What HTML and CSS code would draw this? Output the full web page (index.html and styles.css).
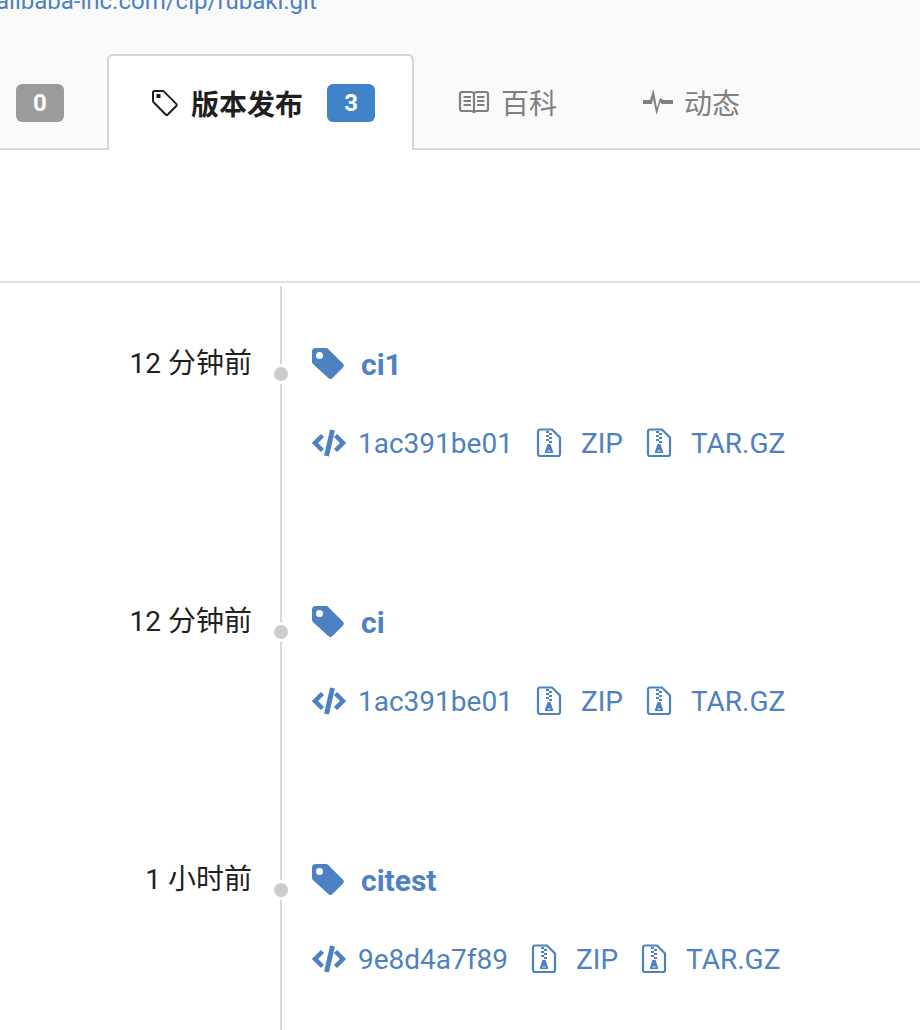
FILE: index.html
```html
<!DOCTYPE html>
<html lang="zh">
<head>
<meta charset="utf-8">
<title>版本发布</title>
<link rel="stylesheet" href="styles.css">
</head>
<body>
<svg class="defs" width="0" height="0">
  <symbol id="i-tag" viewBox="0 0 32 32"><path fill-rule="evenodd" d="M0 3.500A3.500 3.500 0 0 1 3.500 0h10.600a3 3 0 0 1 2.100.900l14.600 14.600a3 3 0 0 1 0 4.200l-10.300 10.400a3 3 0 0 1-4.200 0L.900 15.900a3 3 0 0 1-.900-2.100zM7.500 4a3.500 3.500 0 1 0 0 7 3.500 3.500 0 0 0 0-7z" fill="#4e81c1"/></symbol>
  <symbol id="i-code" viewBox="0 0 36 28"><path d="M11.500 6.500L4 14l7.500 7.500M24.500 6.500L32 14l-7.500 7.500" fill="none" stroke="#4e81c1" stroke-width="4.500"/><path d="M21.500 1l-6 26" fill="none" stroke="#4e81c1" stroke-width="5"/></symbol>
  <symbol id="i-zip" viewBox="0 0 26 30"><path d="M2 3.500A2 2 0 0 1 4 1.500h12l8 8V26a2 2 0 0 1-2 2H4a2 2 0 0 1-2-2z" fill="none" stroke="#4e81c1" stroke-width="2.200"/><path d="M10 3h3v2h-3zM13 5h3v2h-3zM10 7h3v2h-3zM13 9h3v2h-3zM10 11h3v2h-3zM13 13h3v2h-3zM11.500 16h3l2.500 7.500v1.500H9v-1.500zM11.500 22.500v1h3v-1z" fill="#4e81c1"/></symbol>
</svg>
<header class="head">
  <a class="url">alibaba-inc.com/cip/rubaki.git</a>
  <nav class="tabs">
    <span class="badge grey">0</span>
    <a class="tab active">
      <svg width="28" height="28" viewBox="0 0 28 28"><path d="M2 3.500A1.500 1.500 0 0 1 3.500 2h8.300a1.500 1.500 0 0 1 1 .400l12.500 12.500a1.500 1.500 0 0 1 0 2.100l-8.500 8.500a1.500 1.500 0 0 1-2.100 0L2.400 13a1.500 1.500 0 0 1-.400-1z" fill="none" stroke="#1f1f1f" stroke-width="2"/><rect x="5.500" y="5" width="4" height="4" fill="#1f1f1f"/></svg>
      <span class="tl">版本发布</span>
      <span class="badge blue">3</span>
    </a>
    <a class="tab plain wiki">
      <svg width="32" height="24" viewBox="0 0 32 24"><path d="M4 2h8.500c1.700 0 3.500 .7 3.500 2 0-1.300 1.800-2 3.500-2H28a2 2 0 0 1 2 2v15a2 2 0 0 1-2 2h-8.500c-1.700 0-3.500 .5-3.500 2 0-1.500-1.800-2-3.500-2H4a2 2 0 0 1-2-2V4a2 2 0 0 1 2-2zM16 4v19" fill="none" stroke="#808080" stroke-width="2.200"/><path d="M5.500 7H13M5.500 11H13M5.500 15H13M19 7h7.500M19 11h7.500M19 15h7.500" stroke="#808080" stroke-width="2.200"/></svg>
      <span>百科</span>
    </a>
    <a class="tab plain pulse">
      <svg width="30" height="26" viewBox="0 0 30 26"><path d="M0 11h7l3.500-11 3.500 19 3-10 3.500 2h9.500v4h-11l-2-1.500L13.500 26 10 9.500 9 15H0z" fill="#808080"/></svg>
      <span>动态</span>
    </a>
  </nav>
</header>
<div class="filter"></div>
<main class="timeline">
  <article class="rel">
    <time class="when">12 分钟前</time>
    <span class="dot"></span>
    <div class="info">
      <h3 class="name"><svg width="32" height="32"><use href="#i-tag"/></svg><span>ci1</span></h3>
      <div class="links">
        <svg width="36" height="28"><use href="#i-code"/></svg>
        <span class="sha">1ac391be01</span>
        <svg class="zip" width="26" height="30"><use href="#i-zip"/></svg>
        <span class="fmt">ZIP</span>
        <svg class="zip" width="26" height="30"><use href="#i-zip"/></svg>
        <span class="fmt">TAR.GZ</span>
      </div>
    </div>
  </article>
  <article class="rel">
    <time class="when">12 分钟前</time>
    <span class="dot"></span>
    <div class="info">
      <h3 class="name"><svg width="32" height="32"><use href="#i-tag"/></svg><span>ci</span></h3>
      <div class="links">
        <svg width="36" height="28"><use href="#i-code"/></svg>
        <span class="sha">1ac391be01</span>
        <svg class="zip" width="26" height="30"><use href="#i-zip"/></svg>
        <span class="fmt">ZIP</span>
        <svg class="zip" width="26" height="30"><use href="#i-zip"/></svg>
        <span class="fmt">TAR.GZ</span>
      </div>
    </div>
  </article>
  <article class="rel">
    <time class="when">1 小时前</time>
    <span class="dot"></span>
    <div class="info">
      <h3 class="name"><svg width="32" height="32"><use href="#i-tag"/></svg><span>citest</span></h3>
      <div class="links">
        <svg width="36" height="28"><use href="#i-code"/></svg>
        <span class="sha">9e8d4a7f89</span>
        <svg class="zip" width="26" height="30"><use href="#i-zip"/></svg>
        <span class="fmt">ZIP</span>
        <svg class="zip" width="26" height="30"><use href="#i-zip"/></svg>
        <span class="fmt">TAR.GZ</span>
      </div>
    </div>
  </article>
</main>
```

FILE: styles.css
```css
* { box-sizing: border-box; }
html, body { margin: 0; height: 1030px; overflow: hidden; background: #fff; }
body { font-family: Roboto, "Noto Sans CJK SC", sans-serif; font-size: 28px; color: #212121; }
svg { display: block; flex: none; }
.defs { position: absolute; }

.head { display: flow-root; height: 150px; background: #fafafa; border-bottom: 2px solid #d9d9d9; }
.url { display: block; margin-top: -14px; margin-left: -4px; height: 68px; line-height: 30px; color: #4e81c1; font-size: 24px; white-space: nowrap; }
.tabs { display: flex; align-items: stretch; height: 96px; padding-left: 16px; }
.badge { display: flex; align-items: center; justify-content: center; width: 48px; height: 38px; border-radius: 6px; color: #fff; font-size: 24px; font-weight: 700; }
.grey { background: #9b9b9b; margin-top: 30px; }
.blue { background: #4183c9; }
.tab { display: flex; align-items: center; height: 96px; }
.active { position: relative; width: 307px; margin-left: 43px; padding-left: 42px; background: #fff; border: 2px solid #d4d4d4; border-bottom: 0; border-radius: 6px 6px 0 0; }
.tl { margin-left: 12px; font-weight: 700; color: #1f1f1f; }
.active .badge { margin-left: 24px; }
.plain { color: #808080; gap: 11px; }
.wiki { margin-left: 44px; }
.pulse { margin-left: 86px; }

.filter { height: 133px; border-bottom: 2px solid #e0e0e0; }
.timeline { position: relative; padding-top: 3px; }
.timeline::before { content: ""; position: absolute; left: 280px; top: 3px; width: 2px; height: 760px; background: #d9d9d9; }
.rel { position: relative; display: flex; height: 258px; padding-top: 53px; }
.when { width: 252px; text-align: right; line-height: 50px; white-space: pre; color: #212121; }
.dot { position: absolute; left: 274px; top: 81px; width: 14px; height: 14px; border-radius: 50%; background: #ccc; box-shadow: 0 0 0 3px #fff; }
.info { margin-left: 60px; }
.name { display: flex; align-items: center; gap: 17px; height: 50px; margin: 0; font-size: 30px; font-weight: 700; color: #4e81c1; }
.links { display: flex; align-items: center; height: 40px; margin-top: 34px; margin-left: -1px; color: #4e81c1; }
.sha { margin-left: 11px; }
.zip { margin-left: 23px; }
.fmt { margin-left: 19px; }
```
